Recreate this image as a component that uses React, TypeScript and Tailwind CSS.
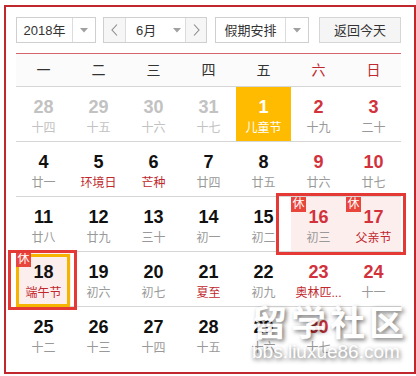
import React from "react";

type Cell = {
  n: number;
  l: string;
  other?: boolean;
  redNum?: boolean;
  redLunar?: boolean;
  today?: boolean;
  rest?: boolean;
  selected?: boolean;
};

const rows: Cell[][] = [
  [
    { n: 28, l: "十四", other: true },
    { n: 29, l: "十五", other: true },
    { n: 30, l: "十六", other: true },
    { n: 31, l: "十七", other: true },
    { n: 1, l: "儿童节", today: true },
    { n: 2, l: "十九", redNum: true },
    { n: 3, l: "二十", redNum: true },
  ],
  [
    { n: 4, l: "廿一" },
    { n: 5, l: "环境日", redLunar: true },
    { n: 6, l: "芒种", redLunar: true },
    { n: 7, l: "廿四" },
    { n: 8, l: "廿五" },
    { n: 9, l: "廿六", redNum: true },
    { n: 10, l: "廿七", redNum: true },
  ],
  [
    { n: 11, l: "廿八" },
    { n: 12, l: "廿九" },
    { n: 13, l: "三十" },
    { n: 14, l: "初一" },
    { n: 15, l: "初二" },
    { n: 16, l: "初三", redNum: true, rest: true },
    { n: 17, l: "父亲节", redNum: true, redLunar: true, rest: true },
  ],
  [
    { n: 18, l: "端午节", redLunar: true, rest: true, selected: true },
    { n: 19, l: "初六" },
    { n: 20, l: "初七" },
    { n: 21, l: "夏至", redLunar: true },
    { n: 22, l: "初九" },
    { n: 23, l: "奥林匹...", redNum: true, redLunar: true },
    { n: 24, l: "十一", redNum: true },
  ],
  [
    { n: 25, l: "十二" },
    { n: 26, l: "十三" },
    { n: 27, l: "十四" },
    { n: 28, l: "十五" },
    { n: 29, l: "十六" },
    { n: 30, l: "十七", redNum: true },
  ],
];

const Tri = () => (
  <svg width="8" height="5" viewBox="0 0 8 5">
    <path d="M0 0 L8 0 L4 4.5 Z" fill="#a0a0a0" />
  </svg>
);

const Chevron = ({ dir }: { dir: "l" | "r" }) => (
  <svg width="7" height="12" viewBox="0 0 7 12">
    <polyline
      points={dir === "l" ? "6,0.5 1,6 6,11.5" : "1,0.5 6,6 1,11.5"}
      fill="none"
      stroke="#8a8a8a"
      strokeWidth="1.1"
    />
  </svg>
);

function DayCell({ c }: { c: Cell }) {
  let numColor = "text-[#111]";
  let lunarColor = "text-[#999]";
  if (c.other) {
    numColor = "text-[#c2c2c2]";
    lunarColor = "text-[#c2c2c2]";
  }
  if (c.redNum) numColor = "text-[#d2323c]";
  if (c.redLunar) lunarColor = "text-[#c0282d]";
  if (c.today) {
    numColor = "text-white";
    lunarColor = "text-white";
  }
  const bg = c.today ? "bg-[#ffbb00]" : c.rest ? "bg-[#fdeeee]" : "";
  return (
    <div className={`relative h-[54px] flex flex-col items-center ${bg}`}>
      {c.selected && (
        <div className="absolute left-0 top-[2px] w-[54px] h-[53px] border-[3px] border-[#f5b400]" />
      )}
      {c.rest && (
        <div className="absolute left-0 top-0 w-[15px] h-[15px] bg-[#e8453c] text-white text-[12px] leading-[15px] text-center">
          休
        </div>
      )}
      <div className={`mt-[10px] h-[20px] leading-[20px] text-[18px] font-bold ${numColor}`}>{c.n}</div>
      <div className={`mt-[3px] h-[16px] leading-[16px] text-[12px] whitespace-nowrap ${lunarColor}`}>{c.l}</div>
    </div>
  );
}

export default function App() {
  const week = ["一", "二", "三", "四", "五", "六", "日"];
  return (
    <div
      className="relative w-[416px] h-[376px] bg-white overflow-hidden"
      style={{ fontFamily: '"Liberation Sans", "Noto Sans CJK SC", sans-serif' }}
    >
      <div className="ml-[4px] mt-[5px] w-[412px] h-[369px] border-2 border-[#c0282d] pl-[10px] pt-[10px]">
        {/* controls */}
        <div className="flex h-[26px] text-[13px] text-[#333]">
          <div className="flex w-[80px] h-[26px] border border-[#cfcfcf] bg-white">
            <div className="w-[55px] flex items-center justify-center leading-none">2018年</div>
            <div className="w-[23px] border-l border-[#dcdcdc] flex items-center justify-center">
              <Tri />
            </div>
          </div>
          <div className="flex ml-[7px] w-[104px] h-[26px] border border-[#cfcfcf] bg-white">
            <div className="w-[22px] border-r border-[#dcdcdc] bg-[#f6f6f6] flex items-center justify-center">
              <Chevron dir="l" />
            </div>
            <div className="w-[59px] flex items-center pl-[10px] leading-none">
              <span>6月</span>
              <span className="ml-[17px] flex"><Tri /></span>
            </div>
            <div className="w-[21px] border-l border-[#dcdcdc] bg-[#f6f6f6] flex items-center justify-center">
              <Chevron dir="r" />
            </div>
          </div>
          <div className="flex ml-[8px] w-[94px] h-[26px] border border-[#cfcfcf] bg-white">
            <div className="w-[69px] flex items-center justify-center leading-none">假期安排</div>
            <div className="w-[23px] border-l border-[#dcdcdc] flex items-center justify-center">
              <Tri />
            </div>
          </div>
          <div className="ml-[10px] w-[82px] h-[26px] border border-[#d6d6d6] bg-[#f5f5f5] flex items-center justify-center leading-none">
            返回今天
          </div>
        </div>
        <div className="mt-[10px] w-[385px] h-px bg-[#d5666a]" />
        {/* weekday header */}
        <div className="grid grid-cols-[repeat(7,55px)] w-[385px] h-[33px] bg-[#fbfbfb] border-b border-[#d6d6d6]">
          {week.map((w, i) => (
            <div
              key={w}
              className={`flex items-center justify-center text-[14px] ${i >= 5 ? "text-[#c0282d]" : "text-[#333]"}`}
            >
              {w}
            </div>
          ))}
        </div>
        {rows.map((r, ri) => (
          <div
            key={ri}
            className={`grid grid-cols-[repeat(7,55px)] w-[385px] ${ri < 4 ? "border-b border-[#d6d6d6]" : ""}`}
          >
            {r.map((c, ci) => (
              <DayCell key={ci} c={c} />
            ))}
          </div>
        ))}
      </div>

      {/* annotation boxes */}
      <div className="absolute left-[276px] top-[193px] w-[130px] h-[62px] border-[3px] border-[#e53935]" />
      <div className="absolute left-[8px] top-[250px] w-[69px] h-[60px] border-[3px] border-[#e53935]" />

      {/* watermark */}
      <div className="absolute left-[252px] top-[304px] w-[162px] flex flex-col items-start opacity-90">
        <div className="text-[35px] leading-[40px] font-bold text-white tracking-[4px] [text-shadow:2px_2px_4px_rgba(0,0,0,0.6)]">
          留学社区
        </div>
        <div className="-mt-[2px] text-[19px] leading-[20px] text-white [text-shadow:1px_2px_4px_rgba(0,0,0,0.7)]">
          bbs.liuxue86.com
        </div>
      </div>
    </div>
  );
}
